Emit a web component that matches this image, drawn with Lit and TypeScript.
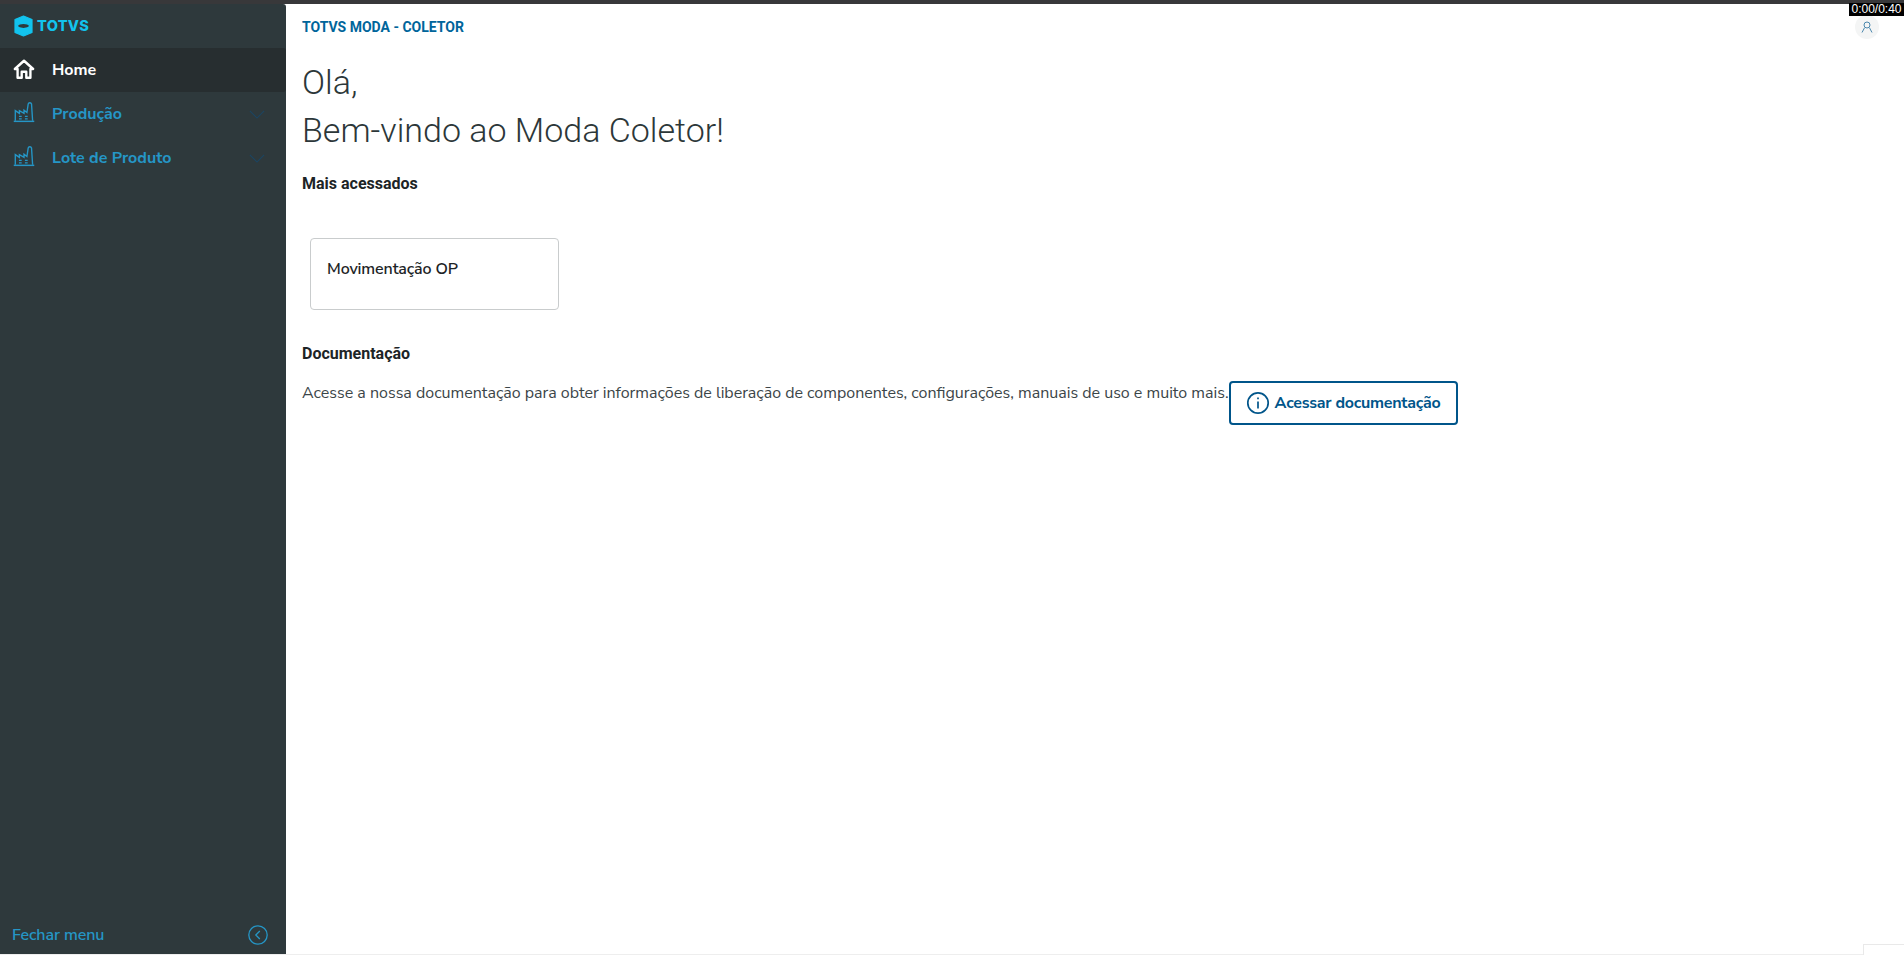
import { LitElement, html, css } from "lit";
import { customElement } from "lit/decorators.js";

const factory = html`<svg class="ico fact" viewBox="0 0 24 24" fill="none" stroke="currentColor" stroke-width="1.5">
  <path d="M2.5 21.5V10.5L7 13.5V10.5L12 13.5V10L15.2 12.6L16.6 3.2C17 1.6 19.6 1.2 20.2 3.2L21.4 21.5"/>
  <path d="M0.8 22.2H23.2" stroke-width="1.6"/>
  <path d="M6.5 16.8H9.5M13 16.8H16M6.5 19.6H9.5M13 19.6H16" stroke-width="1.3"/>
</svg>`;

const chevron = html`<svg class="chev" viewBox="0 0 18 10" fill="none" stroke="#1b4562" stroke-width="1.2"><path d="M1 1L9 9L17 1"/></svg>`;

@customElement("app-root")
export class AppRoot extends LitElement {
  static styles = css`
    :host { display: flex; flex-direction: column; height: 100vh; width: 100%; background: #fff; position: relative; overflow: hidden; font-family: "Roboto", sans-serif; }
    .topbar { height: 4px; flex: none; background: #38383a; }
    .shell { flex: 1; display: flex; min-height: 0; }
    .side { width: 286px; flex: none; background: #2e393c; display: flex; flex-direction: column; font-family: "Nunito Sans", "Open Sans", sans-serif; border-top-right-radius: 3px; }
    .logo { height: 44px; display: flex; align-items: center; padding-left: 14px; gap: 4px; flex: none; color: #12c3ee; }
    .logo svg { width: 19px; height: 22px; display: block; }
    .logo span { font-family: "Inter", "Roboto", sans-serif; font-weight: 800; font-size: 14.5px; letter-spacing: 0.3px; line-height: 1; }
    .item { height: 44px; display: flex; align-items: center; padding-left: 13px; color: #2596c6; font-size: 16px; line-height: 20px; font-weight: 700; flex: none; }
    .item .label { flex: 1; }
    .item.active { background: #272e30; color: #fff; border-radius: 0 3px 3px 0; }
    .ico { width: 22px; height: 22px; flex: none; display: block; margin-right: 17px; margin-top: -2px; }
    .ico.fact { margin-top: -4px; }
    .chev { width: 16px; height: 9px; margin-right: 21px; display: block; }
    .spacer { flex: 1; }
    .foot { height: 38px; flex: none; display: flex; align-items: center; justify-content: space-between; padding: 0 18px 2px 12px; box-sizing: border-box; color: #2596c6; font-size: 16px; font-weight: 600; letter-spacing: -0.1px; }
    .foot svg { width: 20px; height: 20px; display: block; }
    .main { flex: 1; min-width: 0; padding: 0 16px; color: #1f2527; }
    .app-title { color: #00659b; font-weight: 700; font-size: 14px; line-height: 16px; margin-top: 15px; }
    h1 { margin: 23px 0 0; font-weight: 300; font-size: 34px; line-height: 48px; color: #2c3739; }
    h2 { margin: 0; font-weight: 700; font-size: 16px; line-height: 20px; color: #1d2426; }
    h2.most { margin-top: 20px; }
    .card { box-sizing: border-box; width: 249px; height: 72px; margin: 44px 0 0 8px; border: 1px solid #c9cccd; border-radius: 4px; padding: 20px 16px; font-family: "Nunito Sans", "Open Sans", sans-serif; font-size: 16px; font-weight: 600; line-height: 20px; color: #1d2426; letter-spacing: -0.13px; }
    h2.doc { margin-top: 34px; }
    .docrow { display: flex; align-items: flex-start; margin-top: 17px; font-family: "Nunito Sans", "Open Sans", sans-serif; font-size: 16px; color: #3b4548; }
    .docrow p { margin: 0; line-height: 24px; white-space: nowrap; }
    .btn { box-sizing: border-box; height: 44px; width: 229px; display: flex; align-items: center; justify-content: center; gap: 5px; border: 2px solid #00558a; border-radius: 4px; color: #00558a; font-weight: 700; font-size: 16px; letter-spacing: -0.25px; background: #fff; }
    .btn svg { width: 24px; height: 24px; display: block; flex: none; }
    .timer { position: absolute; top: 3px; right: 0; background: #000; color: #fff; font-family: "Liberation Sans", sans-serif; font-size: 12px; line-height: 12px; height: 13px; width: 55px; text-align: center; }
    .avatar { position: absolute; top: 15px; right: 25px; width: 24px; height: 24px; border-radius: 50%; background: #f4f5f5; display: flex; align-items: center; justify-content: center; }
    .avatar svg { width: 12px; height: 12px; display: block; }
    .corner { position: absolute; right: 0; bottom: 0; width: 41px; height: 11px; box-sizing: border-box; border: 1px solid #e9e9e9; border-width: 1px 0 0 1px; background: #fff; }
    .bottomline { position: absolute; left: 0; right: 0; bottom: 0; height: 1px; background: #eeeeee; }
  `;

  render() {
    return html`
      <div class="topbar"></div>
      <div class="shell">
        <nav class="side">
          <div class="logo">
            <svg viewBox="0 0 19 22"><path fill="#12c3ee" stroke="#12c3ee" stroke-width="1.2" stroke-linejoin="round" fill-rule="evenodd" d="M9.5 1L18 4.5V17.5L9.5 21L1 17.5V4.5ZM2.6 11C5.6 14.6 13.4 14.6 16.4 11C13.4 7.4 5.6 7.4 2.6 11Z"/></svg>
            <span>TOTVS</span>
          </div>
          <div class="item active">
            <svg class="ico" viewBox="0 0 24 24" fill="none" stroke="#fff" stroke-width="2.6" stroke-linejoin="round"><path d="M2 12L12 3L22 12H19V21.5H14.5V15H9.5V21.5H5V12Z"/></svg>
            <span class="label">Home</span>
          </div>
          <div class="item">${factory}<span class="label">Produção</span>${chevron}</div>
          <div class="item">${factory}<span class="label">Lote de Produto</span>${chevron}</div>
          <div class="spacer"></div>
          <div class="foot">
            <span>Fechar menu</span>
            <svg viewBox="0 0 20 20" fill="none" stroke="#2596c6" stroke-width="1.3"><circle cx="10" cy="10" r="9.2"/><path d="M11.8 6L7.8 10L11.8 14"/></svg>
          </div>
        </nav>
        <main class="main">
          <div class="app-title">TOTVS MODA - COLETOR</div>
          <h1>Olá,<br />Bem-vindo ao Moda Coletor!</h1>
          <h2 class="most">Mais acessados</h2>
          <div class="card">Movimentação OP</div>
          <h2 class="doc">Documentação</h2>
          <div class="docrow">
            <p>Acesse a nossa documentação para obter informações de liberação de componentes, configurações, manuais de uso e muito mais.</p>
            <div class="btn">
              <svg viewBox="0 0 24 24" fill="none" stroke="#00558a" stroke-width="1.7"><circle cx="12" cy="12" r="10.2"/><path d="M12 10.5V17.5M12 6.5V8.3"/></svg>
              <span>Acessar documentação</span>
            </div>
          </div>
        </main>
      </div>
      <div class="avatar">
        <svg viewBox="0 0 12 12" fill="none" stroke="#4a87ad" stroke-width="1"><circle cx="6" cy="4" r="3"/><path d="M1 11.5L3.5 6.8M11 11.5L8.5 6.8"/></svg>
      </div>
      <div class="timer">0:00/0:40</div>
      <div class="bottomline"></div>
      <div class="corner"></div>
    `;
  }
}
